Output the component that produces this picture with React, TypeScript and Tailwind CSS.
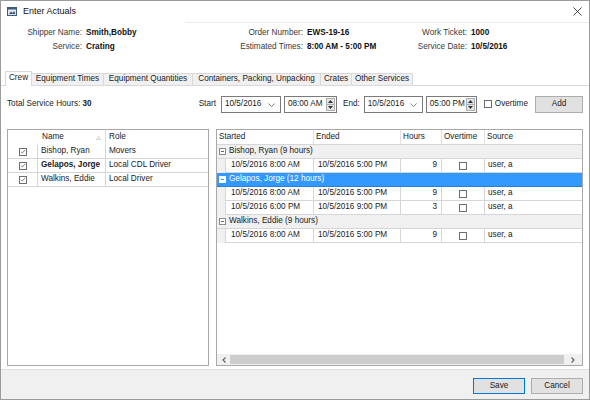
import React from 'react';

const font = "font-['Liberation_Sans',Arial,sans-serif]";

function Box({ checked, size = 'size-[8px]' }: { checked?: boolean; size?: string }) {
  return (
    <span className={`inline-flex ${size} items-center justify-center border border-[#6e6e6e] bg-white`}>
      {checked && (
        <svg viewBox="0 0 8 8" className="size-[7px]">
          <path d="M1.2 4.2 3.1 6 6.8 1.8" fill="none" stroke="#4a4a4a" strokeWidth="0.9" />
        </svg>
      )}
    </span>
  );
}

function DateBox({ value, w }: { value: string; w: string }) {
  return (
    <div className={`flex h-[17px] ${w} items-center border border-[#7a7a7a] bg-white pl-[3px] pr-[5px]`}>
      <span className="flex-1 leading-none">{value}</span>
      <svg viewBox="0 0 7 4" className="h-[4px] w-[7px]">
        <path d="M0.5 0.5 3.5 3.5 6.5 0.5" fill="none" stroke="#666" strokeWidth="0.8" />
      </svg>
    </div>
  );
}

function TimeBox({ value, w }: { value: string; w: string }) {
  return (
    <div className={`flex h-[17px] ${w} items-stretch border border-[#7a7a7a] bg-white`}>
      <span className="flex flex-1 items-center pl-[3px] leading-none">{value}</span>
      <div className="my-[1px] mr-[1px] flex w-[9px] flex-col border border-[#adadad] bg-[#e5e5e5]">
        <div className="flex flex-1 items-center justify-center border-b border-[#adadad]">
          <svg viewBox="0 0 5 3" className="h-[3px] w-[5px]">
            <path d="M0 3 2.5 0 5 3Z" fill="#333" />
          </svg>
        </div>
        <div className="flex flex-1 items-center justify-center">
          <svg viewBox="0 0 5 3" className="h-[3px] w-[5px]">
            <path d="M0 0 2.5 3 5 0Z" fill="#333" />
          </svg>
        </div>
      </div>
    </div>
  );
}

function Expander({ selected }: { selected?: boolean }) {
  return (
    <span
      className={`inline-flex size-[7px] items-center justify-center border ${
        selected ? 'border-white bg-white' : 'border-[#8c8c8c] bg-white'
      }`}
    >
      <span className={`h-px w-[3px] ${selected ? 'bg-[#3399ff]' : 'bg-[#666]'}`} />
    </span>
  );
}

const tabs = [
  { label: 'Equipment Times', w: 'w-[72px]' },
  { label: 'Equipment Quantities', w: 'w-[89px]' },
  { label: 'Containers, Packing, Unpacking', w: 'w-[128px]' },
  { label: 'Crates', w: 'w-[31px]' },
  { label: 'Other Services', w: 'w-[61px]' },
];

const crew = [
  { name: 'Bishop, Ryan', role: 'Movers', bold: false },
  { name: 'Gelapos, Jorge', role: 'Local CDL Driver', bold: true },
  { name: 'Walkins, Eddie', role: 'Local Driver', bold: false },
];

const groups = [
  {
    title: 'Bishop, Ryan (9 hours)',
    selected: false,
    rows: [{ start: '10/5/2016 8:00 AM', end: '10/5/2016 5:00 PM', hours: 9 }],
  },
  {
    title: 'Gelapos, Jorge (12 hours)',
    selected: true,
    rows: [
      { start: '10/5/2016 8:00 AM', end: '10/5/2016 5:00 PM', hours: 9 },
      { start: '10/5/2016 6:00 PM', end: '10/5/2016 9:00 PM', hours: 3 },
    ],
  },
  {
    title: 'Walkins, Eddie (9 hours)',
    selected: false,
    rows: [{ start: '10/5/2016 8:00 AM', end: '10/5/2016 5:00 PM', hours: 9 }],
  },
];

export default function App() {
  return (
    <div
      className={`${font} flex h-[400px] w-[590px] flex-col overflow-hidden border border-[#9b9b9b] bg-white text-[8.2px] text-[#1a1a1a]`}
    >
      {/* title bar */}
      <div className="flex h-[21px] shrink-0 items-center pl-[6px] pr-[7px]">
        <svg viewBox="0 0 10 9" className="h-[9px] w-[10px]">
          <rect x="0.5" y="0.5" width="9" height="8" fill="#dfe6ef" stroke="#3f5a7a" />
          <rect x="0.5" y="0.5" width="9" height="2" fill="#3f5a7a" />
          <path d="M2 7 4 4.5 5.5 6 7 4 8.5 7Z" fill="#3f5a7a" />
        </svg>
        <span className="ml-[6px] text-[9px] leading-none text-[#111]">Enter Actuals</span>
        <svg viewBox="0 0 10 10" className="ml-auto size-[9px]">
          <path d="M0.5 0.5 9.5 9.5M9.5 0.5 0.5 9.5" stroke="#222" strokeWidth="0.9" />
        </svg>
      </div>

      {/* header info */}
      <div className="ml-[184px] border-t border-[#ececec]" />
      <div className="grid shrink-0 grid-cols-[81px_118px_103px_97px_67px_1fr] pt-[3px] leading-none">
        {[
          ['Shipper Name:', 'Smith,Bobby', 'Order Number:', 'EWS-19-16', 'Work Ticket:', '1000'],
          ['Service:', 'Crating', 'Estimated Times:', '8:00 AM - 5:00 PM', 'Service Date:', '10/5/2016'],
        ].map((row) => (
          <React.Fragment key={row[0]}>
            {row.map((cell, i) => (
              <div
                key={cell}
                className={`flex h-[14px] items-center ${
                  i % 2 === 0 ? 'justify-end text-[#3a3a3a]' : 'pl-[4px] font-bold text-[#111]'
                }`}
              >
                {cell}
              </div>
            ))}
          </React.Fragment>
        ))}
      </div>

      {/* tabs */}
      <div className="mt-[18px] flex h-[14px] shrink-0 items-end border-b border-[#d9d9d9] pl-[4px] leading-none">
        <div className="relative -mb-px flex h-[15px] w-[27px] items-center justify-center border border-b-0 border-[#d9d9d9] bg-white pb-[1px]">
          Crew
        </div>
        {tabs.map((t) => (
          <div
            key={t.label}
            className={`flex h-[12px] ${t.w} items-center justify-center border-r border-t border-[#d9d9d9] bg-[#f0f0f0]`}
          >
            {t.label}
          </div>
        ))}
      </div>

      {/* toolbar */}
      <div className="mt-[10px] flex h-[17px] shrink-0 items-center pr-[6px] leading-none">
        <div className="flex-1 pl-[6px] text-[#222]">
          Total Service Hours: <span className="font-bold">30</span>
        </div>
        <span className="mr-[5px]">Start</span>
        <DateBox value="10/5/2016" w="w-[60px]" />
        <div className="ml-[3px]">
          <TimeBox value="08:00 AM" w="w-[53px]" />
        </div>
        <span className="ml-[6px] mr-[4px]">End:</span>
        <DateBox value="10/5/2016" w="w-[59px]" />
        <div className="ml-[3px]">
          <TimeBox value="05:00 PM" w="w-[51px]" />
        </div>
        <div className="ml-[7px] flex items-center">
          <Box />
          <span className="ml-[3px]">Overtime</span>
        </div>
        <button className="ml-[7px] h-[17px] w-[48px] border border-[#adadad] bg-[#e1e1e1] leading-none">
          Add
        </button>
      </div>

      {/* grids */}
      <div className="mt-[16px] flex min-h-0 flex-1 gap-[7px] pb-[3px] pl-[6px] leading-none">
        {/* crew list */}
        <div className="flex w-[202px] flex-col border border-[#a8a8a8]">
          <div className="grid h-[15px] grid-cols-[30px_68px_1fr] items-stretch">
            <div />
            <div className="flex items-center justify-between border-r border-[#e0e0e0] pl-[4px] pr-[4px]">
              <span>Name</span>
              <svg viewBox="0 0 6 5" className="h-[4px] w-[5px]">
                <path d="M0.5 4.5 3 0.5 5.5 4.5Z" fill="none" stroke="#b0b0b0" strokeWidth="0.7" />
              </svg>
            </div>
            <div className="flex items-center pl-[3px]">Role</div>
          </div>
          {crew.map((c) => (
            <div
              key={c.name}
              className="grid h-[14px] grid-cols-[30px_68px_1fr] border-b border-[#d6d6d6]"
            >
              <div className="flex items-center justify-center border-r border-[#d6d6d6]">
                <Box checked />
              </div>
              <div className={`flex items-center border-r border-[#d6d6d6] pl-[3px] ${c.bold ? 'font-bold' : ''}`}>
                {c.name}
              </div>
              <div className="flex items-center pl-[3px]">{c.role}</div>
            </div>
          ))}
        </div>

        {/* time entries */}
        <div className="flex w-[367px] flex-col border border-[#a8a8a8]">
          <div className="grid h-[15px] grid-cols-[97px_87px_41px_43px_1fr] border-b border-[#d6d6d6]">
            {['Started', 'Ended', 'Hours', 'Overtime', 'Source'].map((h) => (
              <div key={h} className="flex items-center border-r border-[#e2e2e2] pl-[2px] last:border-r-0">
                {h}
              </div>
            ))}
          </div>
          {groups.map((g) => (
            <React.Fragment key={g.title}>
              <div
                className={`flex h-[14px] items-center border-b pl-[2px] ${
                  g.selected
                    ? 'border-[#2a7fd6] bg-[#3399ff] text-white'
                    : 'border-[#d6d6d6] bg-[#f0f0f0]'
                }`}
              >
                <Expander selected={g.selected} />
                <span className="ml-[3px]">{g.title}</span>
              </div>
              {g.rows.map((r, i) => (
                <div key={i} className="grid h-[14px] grid-cols-[8px_89px_87px_41px_43px_1fr]">
                  <div className="bg-[#f0f0f0]" />
                  <div className="flex items-center border-b border-l border-r border-[#d6d6d6] pl-[5px]">
                    {r.start}
                  </div>
                  <div className="flex items-center border-b border-r border-[#d6d6d6] pl-[4px]">{r.end}</div>
                  <div className="flex items-center justify-end border-b border-r border-[#d6d6d6] pr-[4px]">
                    {r.hours}
                  </div>
                  <div className="flex items-center justify-center border-b border-r border-[#d6d6d6]">
                    <Box />
                  </div>
                  <div className="flex items-center border-b border-[#d6d6d6] pl-[3px]">user, a</div>
                </div>
              ))}
            </React.Fragment>
          ))}
          <div className="flex-1" />
          {/* horizontal scrollbar */}
          <div className="flex h-[11px] items-stretch bg-[#f0f0f0]">
            <div className="flex w-[13px] items-center justify-center">
              <svg viewBox="0 0 4 6" className="h-[6px] w-[4px]">
                <path d="M3.5 0.5 1 3 3.5 5.5" fill="none" stroke="#606060" strokeWidth="1.1" />
              </svg>
            </div>
            <div className="my-[1px] flex-1 bg-[#cdcdcd]" />
            <div className="flex w-[18px] items-center justify-center">
              <svg viewBox="0 0 4 6" className="h-[6px] w-[4px]">
                <path d="M0.5 0.5 3 3 0.5 5.5" fill="none" stroke="#606060" strokeWidth="1.1" />
              </svg>
            </div>
          </div>
        </div>
      </div>

      {/* footer */}
      <div className="flex h-[30px] shrink-0 items-start justify-end gap-[6px] border-t border-[#dfdfdf] bg-[#f0f0f0] pr-[6px] pt-[8px] leading-none">
        <button className="h-[16px] w-[52px] border border-[#0078d7] bg-[#e1e1e1]">Save</button>
        <button className="h-[16px] w-[52px] border border-[#adadad] bg-[#e1e1e1]">Cancel</button>
      </div>
    </div>
  );
}
